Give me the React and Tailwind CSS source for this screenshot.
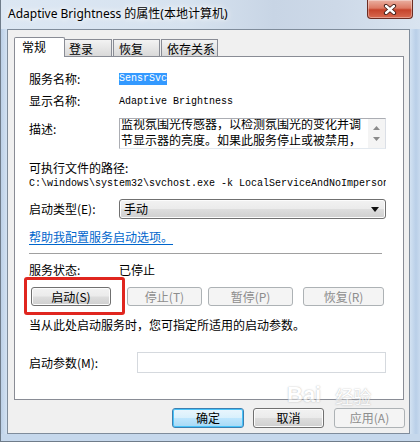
const btnEnabled = "flex items-center justify-center h-[19px] rounded-[3px] border border-[#707070] bg-[linear-gradient(#f2f2f2_0%,#ebebeb_48%,#dddddd_52%,#cfcfcf_100%)] shadow-[inset_0_0_0_1px_#fcfcfc] text-black";
const btnDisabled = "flex items-center justify-center h-[19px] rounded-[3px] border border-[#adb2b5] bg-[#f4f4f4] text-[#8d8d8d]";

function Tri({ up }) {
  return (
    <svg width="7" height="4" viewBox="0 0 7 4">
      {up ? <path d="M0 4 L3.5 0 L7 4 Z" fill="#8a8a8a" /> : <path d="M0 0 L3.5 4 L7 0 Z" fill="#8a8a8a" />}
    </svg>
  );
}

export default function App() {
  return (
    <div className="relative w-[420px] h-[442px] overflow-hidden bg-[#c6d8ec] font-['Noto_Sans_CJK_SC',sans-serif] text-[12px] text-black border-l border-b border-[#6f7c8a]">
      {/* Title bar */}
      <div className="relative h-[29px] bg-[linear-gradient(90deg,#dce7f3_0%,#d6e2ef_45%,#c8d5e5_65%,#cdd9e8_80%,#d9e4f0_100%)]">
        <div className="absolute left-[7px] top-[5px] leading-[18px] text-[12px] font-['Noto_Sans','Noto_Sans_CJK_SC',sans-serif] [text-shadow:0_0_5px_#ffffff,0_0_8px_#ffffff]">
          Adaptive Brightness 的属性(本地计算机)
        </div>
        <div className="absolute left-[366px] top-0 w-[46px] h-[19px] rounded-b-[4px] border border-t-0 border-[#6b2c22] bg-[linear-gradient(#eab0a2_0%,#dd7a64_45%,#c5432b_55%,#d86a50_100%)] shadow-[inset_0_0_0_1px_rgba(255,255,255,0.35)] flex items-center justify-center">
          <svg width="14" height="11" viewBox="0 0 14 11">
            <path d="M3 2 L11 9 M11 2 L3 9" stroke="#3d1a14" strokeWidth="4.2" strokeLinecap="round" />
            <path d="M3 2 L11 9 M11 2 L3 9" stroke="#ffffff" strokeWidth="2.4" strokeLinecap="round" />
          </svg>
        </div>
      </div>

      {/* Body */}
      <div className="flex h-[405px]">
        <div className="w-[6px] bg-[linear-gradient(90deg,#bcd0e7,#d3e2f2)]" />
        <div className="w-[403px] border border-[#7f8c9b] bg-[#f0f0f0] flex flex-col">
          {/* tabs */}
          <div className="flex items-end h-[26px] pl-[6px] pt-[7px]">
            <div className="relative z-10 h-[20px] w-[51px] mb-[-1px] bg-white border border-b-0 border-[#898c95] rounded-t-[2px] pl-[7px] leading-[18px]">常规</div>
            <div className="h-[17px] w-[47px] border border-b-0 border-l-0 border-[#898c95] bg-[linear-gradient(#f3f3f3,#e6e6e6_50%,#d9d9d9)] pl-[4px] leading-[17px]">登录</div>
            <div className="h-[17px] w-[47px] ml-[1px] border border-b-0 border-[#898c95] bg-[linear-gradient(#f3f3f3,#e6e6e6_50%,#d9d9d9)] pl-[5px] leading-[17px]">恢复</div>
            <div className="h-[17px] w-[57px] ml-[1px] border border-b-0 border-[#898c95] bg-[linear-gradient(#f3f3f3,#e6e6e6_50%,#d9d9d9)] pl-[5px] leading-[17px]">依存关系</div>
          </div>
          {/* panel */}
          <div className="ml-[6px] w-[390px] h-[344px] bg-white border border-[#898c95] pl-[14px] flex flex-col">
            <div className="mt-[13px] h-[18px] flex items-center">
              <div className="w-[90px]">服务名称:</div>
              <div className="bg-[#3399ff] text-white font-['Liberation_Mono',monospace] text-[10px] h-[12px] leading-[12px]">SensrSvc</div>
            </div>
            <div className="mt-[4px] h-[18px] flex items-center">
              <div className="w-[90px]">显示名称:</div>
              <div className="font-['Liberation_Mono',monospace] text-[10px]">Adaptive Brightness</div>
            </div>
            <div className="mt-[8px] h-[31px] flex">
              <div className="w-[90px] pt-[3px] leading-[16px]">描述:</div>
              <div className="w-[267px] h-[31px] flex border border-t-[#abadb3] border-l-[#abadb3] border-r-[#dbdfe6] border-b-[#e3e9ef] bg-white overflow-hidden">
                <div className="flex-1 pl-[1px] leading-[16px] -mt-[3px] text-[12px] whitespace-nowrap overflow-hidden">
                  <div>监视氛围光传感器，以检测氛围光的变化并调</div>
                  <div>节显示器的亮度。如果此服务停止或被禁用，</div>
                </div>
                <div className="w-[17px] bg-[#f4f4f4] flex flex-col items-center justify-between py-[7px]">
                  <Tri up />
                  <Tri />
                </div>
              </div>
            </div>
            <div className="mt-[10px] h-[17px] flex items-center">可执行文件的路径:</div>
            <div className="h-[14px] w-[357px] overflow-hidden whitespace-nowrap flex items-center font-['Liberation_Mono',monospace] text-[10px]">C:\windows\system32\svchost.exe -k LocalServiceAndNoImpersonation</div>
            <div className="mt-[9px] h-[20px] flex items-center">
              <div className="w-[90px]">启动类型(E):</div>
              <div className="w-[267px] h-[20px] justify-between px-[4px] flex items-center rounded-[3px] border border-[#707070] bg-[linear-gradient(#f2f2f2_0%,#ebebeb_48%,#dddddd_52%,#cfcfcf_100%)] shadow-[inset_0_0_0_1px_#fcfcfc]">
                <span>手动</span>
                <svg width="8" height="5" viewBox="0 0 8 5" className="mr-[2px]"><path d="M0 0 L8 0 L4 5 Z" fill="#111" /></svg>
              </div>
            </div>
            <div className="mt-[10px] h-[16px] flex items-center">
              <span className="text-[#0066cc] underline underline-offset-2">帮助我配置服务启动选项。</span>
            </div>
            <div className="mt-[8px] h-[1px] w-[353px] bg-[#a0a0a0]" />
            <div className="mt-[8px] h-[16px] flex items-center">
              <div className="w-[90px]">服务状态:</div>
              <div>已停止</div>
            </div>
            <div className="mt-[9px] flex">
              <div className={btnEnabled + " w-[80px] ml-[2px]"}>启动(S)</div>
              <div className={btnDisabled + " w-[75px] ml-[16px]"}>停止(T)</div>
              <div className={btnDisabled + " w-[85px] ml-[6px]"}>暂停(P)</div>
              <div className={btnDisabled + " w-[81px] ml-[10px]"}>恢复(R)</div>
            </div>
            <div className="mt-[11px] h-[16px] flex items-center">当从此处启动服务时，您可指定所适用的启动参数。</div>
            <div className="mt-[19px] h-[21px] flex items-center">
              <div className="w-[108px]">启动参数(M):</div>
              <div className="w-[249px] h-[21px] border border-[#d5d9de] bg-white" />
            </div>
          </div>
          {/* bottom buttons */}
          <div className="mt-[8px] flex">
            <div className="w-[164px]" />
            <div className="flex items-center justify-center w-[72px] h-[20px] rounded-[3px] border border-[#3c7fb1] bg-[linear-gradient(#eaf6fd_0%,#d9f0fc_48%,#bee6fd_52%,#a7d9f5_100%)] shadow-[inset_0_0_0_1px_#48c3f9]">确定</div>
            <div className={btnEnabled + " w-[71px] ml-[9px] h-[20px]"}>取消</div>
            <div className={btnDisabled + " w-[71px] ml-[10px] h-[20px]"}>应用(A)</div>
          </div>
        </div>
        <div className="flex-1 bg-[linear-gradient(90deg,#d3e2f2,#b9cfe8_60%,#c9dbef)]" />
      </div>

      {/* red annotation */}
      <div className="absolute left-[23px] top-[277px] w-[101px] h-[38px] border-[3px] border-[#e0261f] rounded-[3px]" />

      {/* watermark */}
      <div className="absolute left-[286px] top-[384px] flex items-end opacity-60 pointer-events-none">
        <span className="text-[22px] leading-[22px] font-bold font-['Liberation_Sans',sans-serif] text-white [text-shadow:0_0_1px_#9a9a9a,0_0_2px_#bcbcbc]">Bai</span>
        <span className="text-[18px] leading-[20px] ml-[14px] text-white [text-shadow:0_0_1px_#9a9a9a,0_0_2px_#bcbcbc]">经验</span>
      </div>
    </div>
  );
}
